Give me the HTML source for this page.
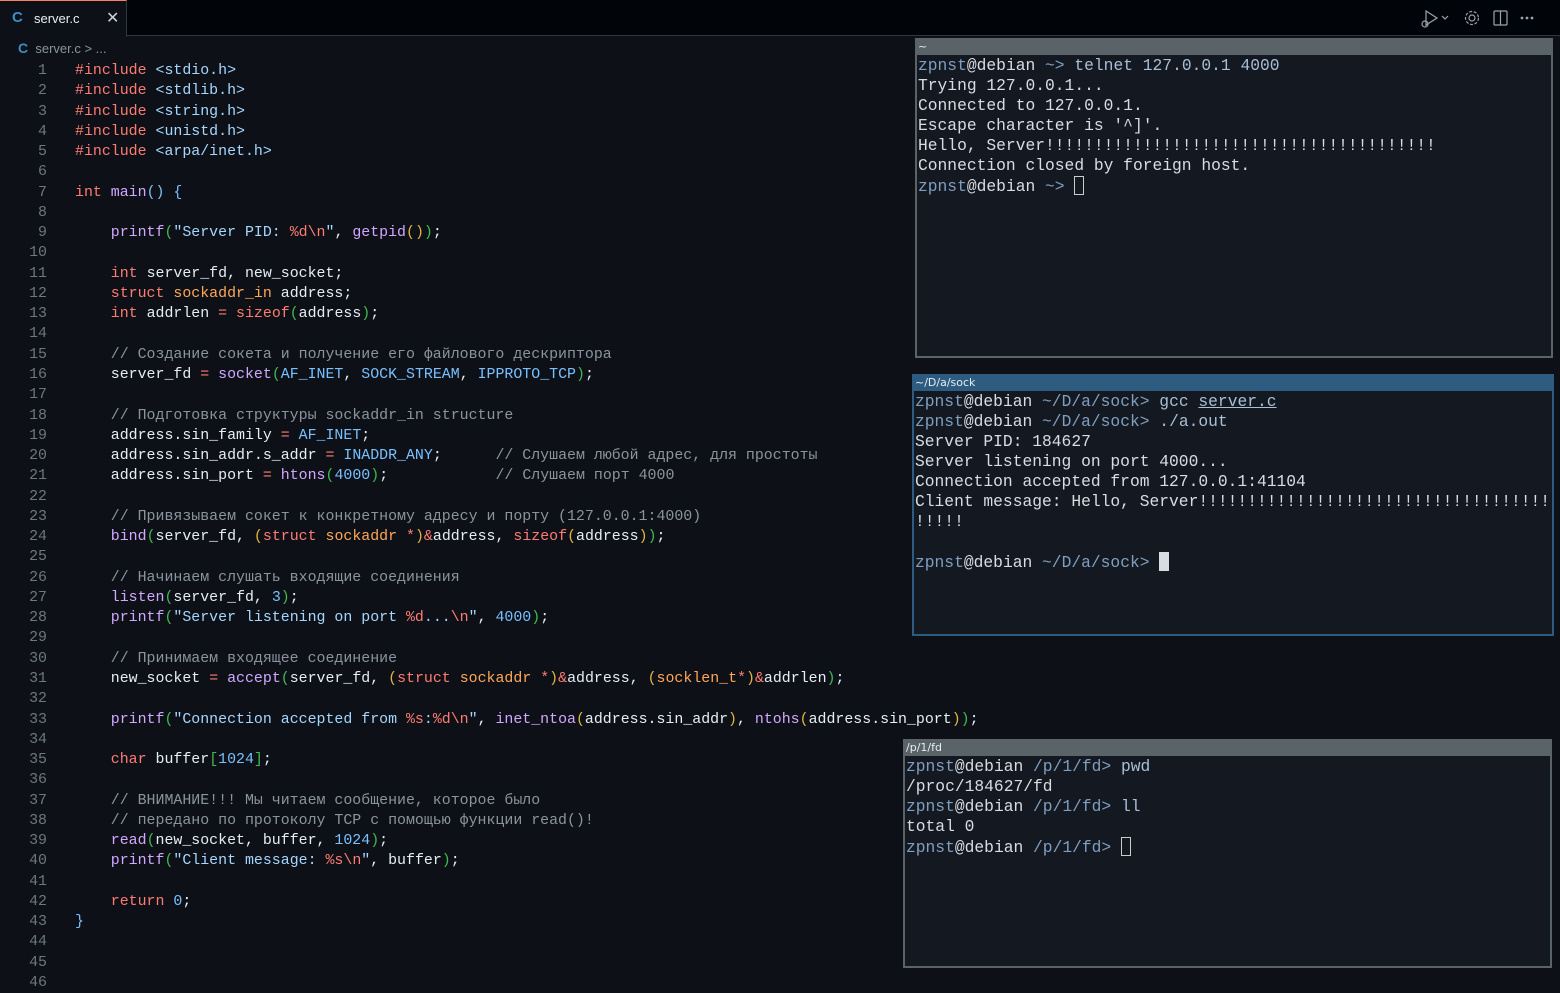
<!DOCTYPE html>
<html><head><meta charset="utf-8"><style>
*{margin:0;padding:0;box-sizing:border-box}
body{width:1560px;height:984px;background:#0d1117;overflow:hidden;position:relative;font-family:"Liberation Sans","DejaVu Sans",sans-serif}
.tabbar{position:absolute;left:0;top:0;width:1560px;height:36px;background:#010409;border-bottom:1px solid #30363d}
.tab{position:absolute;left:0;top:0;width:127px;height:37px;background:#0d1117;border-top:1px solid #f78166;border-right:1px solid #30363d;color:#e6edf3;font-size:13px}
.cicon{color:#3b8dc8;font-weight:bold;font-family:"Liberation Sans",sans-serif}
.bc{position:absolute;left:18px;top:40px;font-size:13px;color:#8b949e}
.code{position:absolute;left:0;top:61px;font-family:"Liberation Mono",monospace;font-size:14.92px;line-height:20.27px;white-space:pre;color:#e6edf3}
.ln{position:absolute;left:0;width:47px;text-align:right;color:#6e7681}
.tx{position:absolute;left:75px}
.k{color:#ff7b72}.s{color:#a5d6ff}.f{color:#d2a8ff}.t{color:#ffa657}.c{color:#8b949e}.n{color:#79c0ff}.g{color:#3fb950}.y{color:#e3b341}.b{color:#79c0ff}
.term{position:absolute;background:#141821;font-family:"Liberation Mono","DejaVu Sans Mono",monospace;font-size:16.3px;line-height:20px;white-space:pre;color:#d8dde3}
.tt{height:17px;font-size:11px;line-height:17px;padding-left:3px;color:#e6edf3;font-family:"DejaVu Sans",sans-serif}
.tb{padding-left:1px;padding-top:1px}
.p{color:#7f9fc0}.cm{color:#a9bfd6}
.cur{display:inline-block;width:10px;height:19px;border:1.5px solid #c8ccd0;vertical-align:-4px}
.curf{display:inline-block;width:10px;height:19px;background:#d8dde3;vertical-align:-4px}
</style></head><body>
<div class="tabbar">
<div class="tab"><span class="cicon" style="position:absolute;left:12px;top:8px;font-size:15px">C</span><span style="position:absolute;left:34px;top:10px">server.c</span><span style="position:absolute;left:106px;top:7px;font-size:16px;color:#c9d1d9">✕</span></div>
<svg style="position:absolute;left:1420px;top:9px" width="120" height="20" viewBox="0 0 120 20" fill="none" stroke="#9aa4ae" stroke-width="1.2"><path d="M6 2 L17 9 L6 16 Z"/><circle cx="5" cy="15" r="3"/><path d="M22 7 l3 3 l3 -3"/><circle cx="52" cy="9" r="3"/><circle cx="52" cy="9" r="6.5" stroke-dasharray="3 1.6"/><rect x="74" y="2" width="13" height="14" rx="1"/><path d="M80.5 2 V16"/><circle cx="102" cy="9" r=".8" fill="#9aa4ae"/><circle cx="107" cy="9" r=".8" fill="#9aa4ae"/><circle cx="112" cy="9" r=".8" fill="#9aa4ae"/></svg>
</div>
<div class="bc"><span class="cicon" style="font-size:14px">C</span>&nbsp; server.c &gt; ...</div>
<div class="code"><div class="ln">1
2
3
4
5
6
7
8
9
10
11
12
13
14
15
16
17
18
19
20
21
22
23
24
25
26
27
28
29
30
31
32
33
34
35
36
37
38
39
40
41
42
43
44
45
46</div><div class="tx"><span class="k">#include</span> <span class="s">&lt;stdio.h&gt;</span>
<span class="k">#include</span> <span class="s">&lt;stdlib.h&gt;</span>
<span class="k">#include</span> <span class="s">&lt;string.h&gt;</span>
<span class="k">#include</span> <span class="s">&lt;unistd.h&gt;</span>
<span class="k">#include</span> <span class="s">&lt;arpa/inet.h&gt;</span>

<span class="k">int</span> <span class="f">main</span><span class="b">()</span> <span class="b">{</span>

    <span class="f">printf</span><span class="g">(</span><span class="s">"Server PID: </span><span class="k">%d\n</span><span class="s">"</span>, <span class="f">getpid</span><span class="y">()</span><span class="g">)</span>;

    <span class="k">int</span> server_fd, new_socket;
    <span class="k">struct</span> <span class="t">sockaddr_in</span> address;
    <span class="k">int</span> addrlen <span class="k">=</span> <span class="k">sizeof</span><span class="g">(</span>address<span class="g">)</span>;

    <span class="c">// Создание сокета и получение его файлового дескриптора</span>
    server_fd <span class="k">=</span> <span class="f">socket</span><span class="g">(</span><span class="n">AF_INET</span>, <span class="n">SOCK_STREAM</span>, <span class="n">IPPROTO_TCP</span><span class="g">)</span>;

    <span class="c">// Подготовка структуры sockaddr_in structure</span>
    address.sin_family <span class="k">=</span> <span class="n">AF_INET</span>;
    address.sin_addr.s_addr <span class="k">=</span> <span class="n">INADDR_ANY</span>;      <span class="c">// Слушаем любой адрес, для простоты</span>
    address.sin_port <span class="k">=</span> <span class="f">htons</span><span class="g">(</span><span class="n">4000</span><span class="g">)</span>;            <span class="c">// Слушаем порт 4000</span>

    <span class="c">// Привязываем сокет к конкретному адресу и порту (127.0.0.1:4000)</span>
    <span class="f">bind</span><span class="g">(</span>server_fd, <span class="y">(</span><span class="k">struct</span> <span class="t">sockaddr</span> <span class="k">*</span><span class="y">)</span><span class="k">&amp;</span>address, <span class="k">sizeof</span><span class="y">(</span>address<span class="y">)</span><span class="g">)</span>;

    <span class="c">// Начинаем слушать входящие соединения</span>
    <span class="f">listen</span><span class="g">(</span>server_fd, <span class="n">3</span><span class="g">)</span>;
    <span class="f">printf</span><span class="g">(</span><span class="s">"Server listening on port </span><span class="k">%d</span><span class="s">...</span><span class="k">\n</span><span class="s">"</span>, <span class="n">4000</span><span class="g">)</span>;

    <span class="c">// Принимаем входящее соединение</span>
    new_socket <span class="k">=</span> <span class="f">accept</span><span class="g">(</span>server_fd, <span class="y">(</span><span class="k">struct</span> <span class="t">sockaddr</span> <span class="k">*</span><span class="y">)</span><span class="k">&amp;</span>address, <span class="y">(</span><span class="t">socklen_t</span><span class="k">*</span><span class="y">)</span><span class="k">&amp;</span>addrlen<span class="g">)</span>;

    <span class="f">printf</span><span class="g">(</span><span class="s">"Connection accepted from </span><span class="k">%s</span><span class="s">:</span><span class="k">%d\n</span><span class="s">"</span>, <span class="f">inet_ntoa</span><span class="y">(</span>address.sin_addr<span class="y">)</span>, <span class="f">ntohs</span><span class="y">(</span>address.sin_port<span class="y">)</span><span class="g">)</span>;

    <span class="k">char</span> buffer<span class="g">[</span><span class="n">1024</span><span class="g">]</span>;

    <span class="c">// ВНИМАНИЕ!!! Мы читаем сообщение, которое было</span>
    <span class="c">// передано по протоколу TCP с помощью функции read()!</span>
    <span class="f">read</span><span class="g">(</span>new_socket, buffer, <span class="n">1024</span><span class="g">)</span>;
    <span class="f">printf</span><span class="g">(</span><span class="s">"Client message: </span><span class="k">%s\n</span><span class="s">"</span>, buffer<span class="g">)</span>;

    <span class="k">return</span> <span class="n">0</span>;
<span class="b">}</span></div></div>

<div class="term" style="left:915px;top:38px;width:638px;height:320px;border:2px solid #5a6468;border-top:none"><div class="tt" style="background:#5a6468;margin:0 -2px">~</div><div class="tb"><span class="p">zpnst</span>@debian <span class="p">~&gt;</span> <span class="cm">telnet 127.0.0.1 4000</span>
Trying 127.0.0.1...
Connected to 127.0.0.1.
Escape character is '^]'.
Hello, Server!!!!!!!!!!!!!!!!!!!!!!!!!!!!!!!!!!!!!!!!
Connection closed by foreign host.
<span class="p">zpnst</span>@debian <span class="p">~&gt;</span> <span class="cur"></span></div></div>

<div class="term" style="left:912px;top:374px;width:642px;height:262px;border:2px solid #2d5c80;border-top:none"><div class="tt" style="background:#2d5c80;margin:0 -2px">~/D/a/sock</div><div class="tb"><span class="p">zpnst</span>@debian <span class="p">~/D/a/sock&gt;</span> <span class="cm">gcc <u>server.c</u></span>
<span class="p">zpnst</span>@debian <span class="p">~/D/a/sock&gt;</span> <span class="cm">./a.out</span>
Server PID: 184627
Server listening on port 4000...
Connection accepted from 127.0.0.1:41104
Client message: Hello, Server!!!!!!!!!!!!!!!!!!!!!!!!!!!!!!!!!!!!
!!!!!

<span class="p">zpnst</span>@debian <span class="p">~/D/a/sock&gt;</span> <span class="curf"></span></div></div>

<div class="term" style="left:903px;top:739px;width:649px;height:229px;border:2px solid #5a6468;border-top:none"><div class="tt" style="background:#5a6468;margin:0 -2px">/p/1/fd</div><div class="tb"><span class="p">zpnst</span>@debian <span class="p">/p/1/fd&gt;</span> <span class="cm">pwd</span>
/proc/184627/fd
<span class="p">zpnst</span>@debian <span class="p">/p/1/fd&gt;</span> <span class="cm">ll</span>
total 0
<span class="p">zpnst</span>@debian <span class="p">/p/1/fd&gt;</span> <span class="cur"></span></div></div>
</body></html>
